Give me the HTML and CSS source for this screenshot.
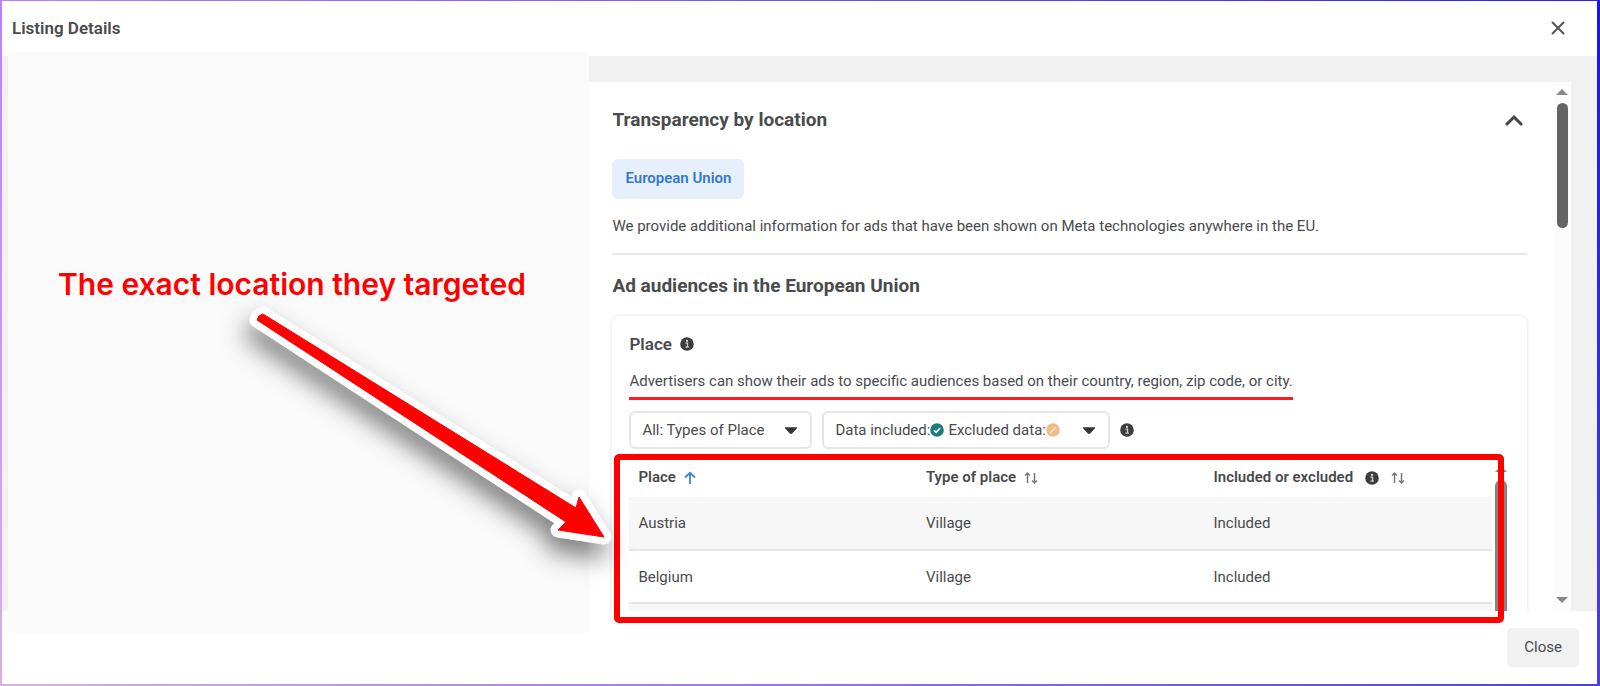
FILE: index.html
```html
<!DOCTYPE html>
<html lang="en">
<head>
  <meta charset="UTF-8">
  <meta name="viewport" content="width=device-width, initial-scale=1.0">
  <title>Listing Details</title>
  <link rel="stylesheet" href="styles.css">
</head>
<body>
  <!-- Shared icons -->
  <svg class="sprite" aria-hidden="true">
    <symbol id="icon-info" viewBox="0 0 14 14">
      <circle cx="7" cy="7" r="6.8" fill="#3c3d3f"/>
      <circle cx="7" cy="3.9" r="1.1" fill="#ddd"/>
      <path d="M5.4 6.2H7.5V10M5.4 10.2H8.9" fill="none" stroke="#ccc" stroke-width="1.3"/>
    </symbol>
    <symbol id="icon-sort" viewBox="0 0 14 14">
      <path d="M3.5 12V2M1 4.5L3.5 2L6 4.5M10.5 2V12M8 9.5L10.5 12L13 9.5" fill="none" stroke="#777" stroke-width="1.5"/>
    </symbol>
    <symbol id="icon-caret" viewBox="0 0 12 8">
      <path d="M1 1H11Q12 1 11 2.4L7 6.6Q6 7.4 5 6.6L1 2.4Q0 1 1 1Z" fill="#333"/>
    </symbol>
  </svg>

  <div class="dialog" role="dialog" aria-labelledby="dialog-title">
    <header class="dialog-header">
      <h1 id="dialog-title">Listing Details</h1>
      <button class="icon-btn" aria-label="Dismiss">
        <svg width="14" height="14" viewBox="0 0 14 14"><path d="M1.5 1.5L12.5 12.5M12.5 1.5L1.5 12.5" stroke="#555" stroke-width="2" stroke-linecap="round"/></svg>
      </button>
    </header>

    <main class="dialog-body">
      <aside class="note">
        <p class="note-text">The exact location they targeted</p>
        <svg class="note-arrow" width="400" height="300" viewBox="230 290 400 300" aria-hidden="true">
          <path d="M263 314L576 508L579 497L604 537L558 530L566 522L257 320Q258 315 263 314Z" fill="#f00" stroke="#fff" stroke-width="15" stroke-linejoin="round"/>
          <path d="M263 314L576 508L579 497L604 537L558 530L566 522L257 320Q258 315 263 314Z" fill="#f00" stroke="#f00" stroke-width="1" stroke-linejoin="round"/>
        </svg>
      </aside>

      <section class="details">
        <div class="panel">
          <div class="panel-top">
            <h2>Transparency by location</h2>
            <button class="icon-btn" aria-label="Collapse">
              <svg width="18" height="12" viewBox="0 0 18 12"><path d="M2 10L9 3L16 10" fill="none" stroke="#444" stroke-width="3" stroke-linecap="round"/></svg>
            </button>
          </div>
          <button class="region-btn">European Union</button>
          <p class="intro">We provide additional information for ads that have been shown on Meta technologies anywhere in the EU.</p>
          <h2 class="audience-title">Ad audiences in the European Union</h2>

          <div class="card">
            <h3>Place <svg width="14" height="14"><use href="#icon-info"/></svg></h3>
            <p class="card-text"><span class="underlined">Advertisers can show their ads to specific audiences based on their country, region, zip code, or city.</span></p>

            <div class="filters">
              <div class="select-box select-type">
                <select aria-label="Types of place">
                  <option>All: Types of Place</option>
                </select>
                <svg class="caret" width="14" height="9"><use href="#icon-caret"/></svg>
              </div>
              <div class="select-box select-data">
                <select id="data-filter" class="clear-text">
                  <option>Included and excluded</option>
                </select>
                <label class="select-label" for="data-filter">
                  Data included:<svg width="14" height="14" viewBox="0 0 14 14"><circle cx="7" cy="7" r="6.8" fill="#1b7c7c"/><path d="M4 7.3L6.2 9.4L10.2 5" fill="none" stroke="#fff" stroke-width="1.7"/></svg>
                  <span>Excluded data:</span><svg width="14" height="14" viewBox="0 0 14 14"><circle cx="7" cy="7" r="6.8" fill="#f2bd85"/><path d="M4 10L10 4" stroke="#fbe6cf" stroke-width="1.7"/></svg>
                </label>
                <svg class="caret" width="14" height="9"><use href="#icon-caret"/></svg>
              </div>
              <svg width="14" height="14"><use href="#icon-info"/></svg>
            </div>

            <div class="table-area">
              <table>
                <thead>
                  <tr>
                    <th>Place <svg class="after" width="12" height="14" viewBox="0 0 12 14"><path d="M6 13V2M1 6.5L6 1.8L11 6.5" fill="none" stroke="#3b82d6" stroke-width="1.8"/></svg></th>
                    <th>Type of place <svg class="after" width="14" height="14"><use href="#icon-sort"/></svg></th>
                    <th>Included or excluded <svg class="after info" width="14" height="14"><use href="#icon-info"/></svg> <svg class="after info" width="14" height="14"><use href="#icon-sort"/></svg></th>
                  </tr>
                </thead>
                <tbody>
                  <tr><td>Austria</td><td>Village</td><td>Included</td></tr>
                  <tr><td>Belgium</td><td>Village</td><td>Included</td></tr>
                  <tr><td></td><td></td><td></td></tr>
                </tbody>
              </table>
              <div class="inner-scroll">
                <svg width="12" height="6" viewBox="0 0 12 6"><path d="M0 6L6 0L12 6Z" fill="#888"/></svg>
                <div class="inner-thumb"></div>
              </div>
            </div>
          </div>
        </div>

        <div class="scrollbar">
          <svg width="12" height="6" viewBox="0 0 12 6"><path d="M0 6L6 0L12 6Z" fill="#888"/></svg>
          <div class="thumb"></div>
          <svg width="12" height="6" viewBox="0 0 12 6"><path d="M0 0L6 6L12 0Z" fill="#888"/></svg>
        </div>
        <div class="highlight"></div>
      </section>
    </main>

    <footer class="dialog-footer">
      <button class="close-btn">Close</button>
    </footer>
  </div>
</body>
</html>
```

FILE: styles.css
```css
* {
  box-sizing: border-box;
}
body {
  font-family: Roboto, Arial, sans-serif;
  font-size: 15px;
  line-height: 20px;
  color: #4a4b4d;
  margin: 0;
  padding: 1px 3px 2px 2px;
  height: 100vh;
  background: linear-gradient(to right, #b980ff, #2a20f0) top / 100% 2px no-repeat,
    linear-gradient(to right, #dcaee6, #5040d8) bottom / 100% 2px no-repeat,
    linear-gradient(#b980ff, #dcaee6) left / 3px 100% no-repeat,
    linear-gradient(#1414f5, #4a40e0) right / 3px 100% no-repeat;
}
h1, h2, h3, p {
  margin: 0;
}
h1, h3 {
  font-size: 17px;
  font-weight: 600;
}
h2 {
  font-size: 19px;
  line-height: 24px;
  font-weight: 700;
}
button, select {
  font: inherit;
  color: inherit;
  border: none;
  cursor: pointer;
}
svg {
  flex: none;
}
.sprite {
  display: none;
}
.dialog {
  display: flex;
  flex-direction: column;
  height: 100%;
  background: #fff;
}
.dialog-header {
  display: flex;
  justify-content: space-between;
  align-items: center;
  height: 55px;
  padding: 0 32px 2px 10px;
}
.icon-btn {
  display: flex;
  background: none;
  padding: 0;
}
.dialog-body {
  display: flex;
  flex: 1;
  min-height: 0;
  padding: 0 26px 0 6px;
  background: #f1f1f1;
}

/* Left column with the callout */
.note {
  position: relative;
  z-index: 1;
  width: 37.2%;
  margin: -4px 0 -22px;
  padding-top: 214px;
  border-radius: 4px;
  background: #fafafa;
}
.note-text {
  font-family: Inter, sans-serif;
  font-size: 30px;
  line-height: 36px;
  font-weight: 600;
  color: #f00;
  padding-left: 50px;
}
.note-arrow {
  position: absolute;
  left: 222px;
  top: 238px;
  overflow: visible;
  filter: drop-shadow(-4px 14px 12px rgba(0, 0, 0, 0.5));
}

/* Right column */
.details {
  position: relative;
  display: flex;
  flex: 1;
  margin-top: 26px;
  background: #fcfcfc;
}
.panel {
  flex: 1;
  overflow: hidden;
  padding: 26px 26px 0 23px;
  border-radius: 8px 8px 0 0;
  background: #fff;
}
.panel-top {
  display: flex;
  justify-content: space-between;
  align-items: center;
  padding-right: 4px;
}
.region-btn {
  margin-top: 27px;
  padding: 9px 13px 11px;
  border-radius: 6px;
  font-weight: 600;
  color: #3578c8;
  background: #e6f0fc;
}
.intro {
  margin-top: 17px;
  padding-bottom: 17px;
  border-bottom: 2px solid #e8e8e8;
}
.audience-title {
  margin-top: 19px;
}
.card {
  margin-top: 18px;
  padding: 18px 20px 0 17px;
  border-radius: 8px;
  box-shadow: 0 0 4px rgba(0, 0, 0, 0.12);
}
.card h3 {
  display: flex;
  align-items: center;
  gap: 8px;
}
.card-text {
  margin-top: 17px;
}
.underlined {
  display: inline-block;
  padding-bottom: 6px;
  border-bottom: 3px solid #ff1a1f;
}
.filters {
  display: flex;
  align-items: center;
  gap: 10px;
  margin-top: 11px;
}
.select-box {
  display: grid;
  align-items: center;
}
.select-box > * {
  grid-area: 1 / 1;
}
.select-box select {
  appearance: none;
  width: 100%;
  height: 38px;
  padding: 0 11px;
  border: 2px solid #e6e6e6;
  border-radius: 6px;
  background: #fff;
}
.select-box .clear-text {
  color: transparent;
}
.select-type {
  width: 183px;
}
.select-data {
  width: 288px;
}
.select-label {
  display: flex;
  align-items: center;
  padding-left: 13px;
  pointer-events: none;
}
.select-label span {
  margin-left: 4px;
}
.caret {
  justify-self: end;
  margin-right: 14px;
  pointer-events: none;
}
.table-area {
  display: flex;
  gap: 3px;
  margin-top: 7px;
}
table {
  flex: 1;
  table-layout: fixed;
  border-collapse: collapse;
}
th, td {
  width: 33%;
  padding: 0 9px;
  text-align: left;
}
th {
  height: 41px;
  font-weight: 600;
}
td {
  height: 53px;
  border-bottom: 2px solid #e6e6e6;
}
tbody tr:nth-child(odd) {
  background: #f7f7f7;
}
.after {
  margin-left: 4px;
  vertical-align: -3px;
}
.after.info {
  margin-left: 8px;
}
.inner-scroll {
  display: flex;
  flex-direction: column;
  gap: 8px;
  width: 12px;
  padding-top: 10px;
}
.inner-thumb {
  flex: 1;
  border-radius: 6px;
  background: #858585;
}
.scrollbar {
  display: flex;
  flex-direction: column;
  align-items: center;
  width: 18px;
  padding: 7px 0 8px;
}
.thumb {
  width: 11px;
  height: 125px;
  margin: 8px 0 auto;
  border-radius: 6px;
  background: #646464;
}
/* Red frame over the table */
.highlight {
  position: absolute;
  left: 25px;
  right: 67px;
  top: 372px;
  bottom: -12px;
  border: 6px solid #f00;
  border-radius: 5px;
}
.dialog-footer {
  display: flex;
  justify-content: flex-end;
  padding: 17px 18px;
}
.close-btn {
  padding: 9px 17px 10px;
  border-radius: 5px;
  background: #f1f1f1;
}
```
